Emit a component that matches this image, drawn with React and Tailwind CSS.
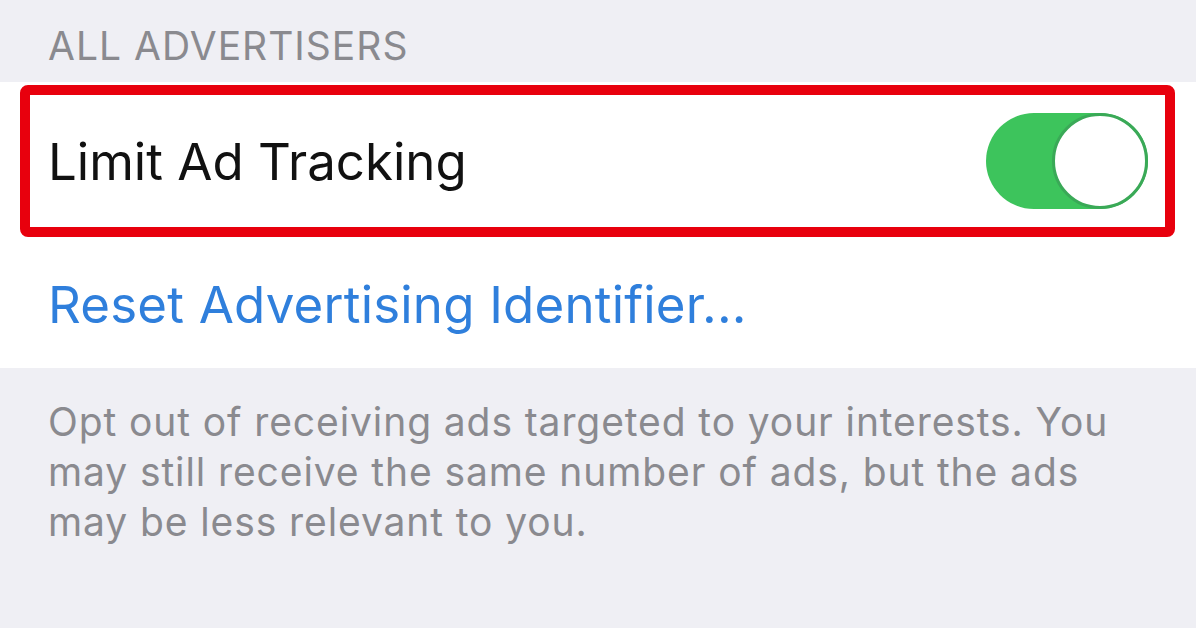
export default function App() {
  return (
    <div
      className="w-[1196px] h-[628px] overflow-hidden bg-[#efeff4] flex flex-col"
      style={{ fontFamily: "Inter, 'Liberation Sans', sans-serif" }}
    >
      {/* section header */}
      <div className="h-[82px] pl-[48px] flex items-end pb-[17px]">
        <span className="text-[39px] leading-none tracking-[1px] text-[#8a8a8f]">ALL ADVERTISERS</span>
      </div>

      <div className="bg-white flex flex-col">
        <div className="h-[158px] flex items-center pl-[20px] pr-[21px]">
          <div className="flex-1 h-[152px] border-[10px] border-[#e8000d] rounded-[8px] flex items-center justify-between pl-[18px] pr-[17px]">
            <span className="text-[51px] leading-none text-[#111]">Limit Ad Tracking</span>
            <Toggle />
          </div>
        </div>
        <div className="h-[128px] flex items-center pl-[48px]">
          <span className="text-[51px] leading-none tracking-[0.2px] text-[#2f7fdc]">Reset Advertising Identifier...</span>
        </div>
      </div>

      <div className="pt-[29px] pl-[48px] w-[1125px] text-[39px] leading-[50px] tracking-[0.9px] text-[#8a8a8f]">
        Opt out of receiving ads targeted to your interests. You may still receive the same number of ads, but the ads
        may be less relevant to you.
      </div>
    </div>
  );
}

function Toggle() {
  return (
    <div className="w-[162px] h-[96px] rounded-full bg-[#3dc45c] flex items-center justify-end">
      <div className="w-[96px] h-[96px] rounded-full bg-white border-[3px] border-[#3aa957]" />
    </div>
  );
}
